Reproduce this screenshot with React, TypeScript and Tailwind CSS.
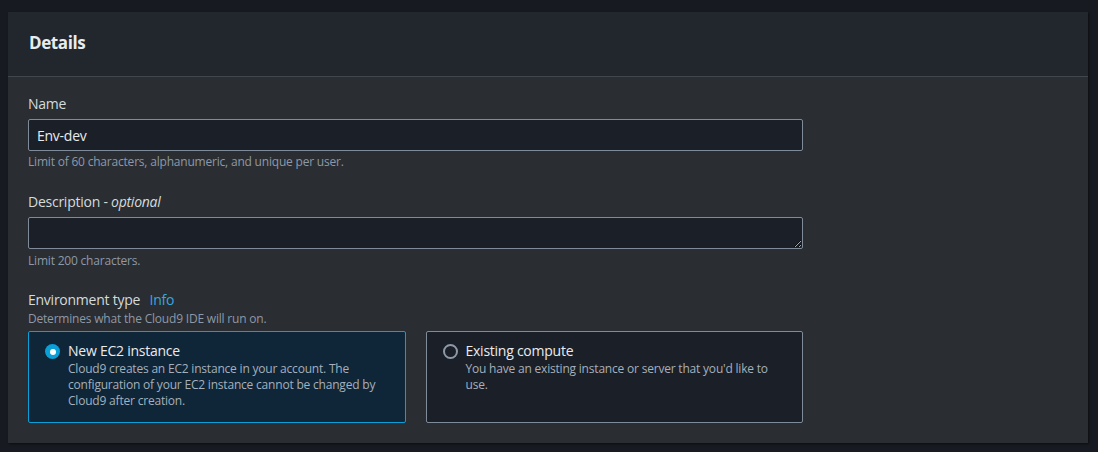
import React from "react";

export default function App() {
  const font = { fontFamily: '"Open Sans", "Noto Sans", Arial, sans-serif' };
  return (
    <div className="w-[1098px] h-[452px] bg-[#171a21] pt-[12px] px-[8px]" style={font}>
      <div className="w-[1080px] h-[431px] bg-[#2a2d32] shadow-[1px_1px_2px_rgba(0,0,0,0.5)] flex flex-col">
        <div className="h-[65px] bg-[#22262d] border-b border-[#414750] flex items-center px-[20px]">
          <h2 className="text-[17px] font-bold tracking-[-0.4px] text-[#e9ebed] leading-[22px] -mt-[3px] ml-[1px]">Details</h2>
        </div>
        <div className="px-[20px] pt-[16px] w-[815px]">
          <div className="text-[14px] leading-[22px] tracking-[-0.25px] text-[#d5dbdb]">Name</div>
          <div className="mt-[4px] h-[32px] border border-[#7f8b98] bg-[#1b1f27] rounded-[2px] flex items-center px-[8px] text-[14px] tracking-[-0.25px] text-[#e9ebed]">
            Env-dev
          </div>
          <div className="mt-[3px] text-[12px] leading-[16px] tracking-[-0.2px] text-[#8d99a8]">
            Limit of 60 characters, alphanumeric, and unique per user.
          </div>

          <div className="mt-[21px] text-[14px] leading-[22px] tracking-[-0.25px] text-[#d5dbdb]">
            Description - <i>optional</i>
          </div>
          <textarea
            className="mt-[4px] block w-full h-[32px] border border-[#7f8b98] bg-[#1b1f27] rounded-[2px] resize-y outline-none"
            defaultValue=""
          />
          <div className="mt-[4px] text-[12px] leading-[16px] tracking-[-0.2px] text-[#8d99a8]">Limit 200 characters.</div>

          <div className="mt-[20px] text-[14px] leading-[22px] tracking-[-0.25px] text-[#d5dbdb]">
            Environment type <span className="ml-[6px] text-[#35a8df]">Info</span>
          </div>
          <div className="text-[12px] leading-[16px] tracking-[-0.2px] text-[#8d99a8]">Determines what the Cloud9 IDE will run on.</div>

          <div className="mt-[4px] grid grid-cols-2 gap-[20px]">
            <div className="h-[92px] border border-[#0a9fd7] bg-[#0f2538] rounded-[2px] pl-[16px] pr-[16px] pt-[9px] flex gap-[8px]">
              <div className="mt-[3px] w-[15px] h-[15px] rounded-full bg-[#0a9fd7] flex items-center justify-center shrink-0">
                <div className="w-[6px] h-[6px] rounded-full bg-white" />
              </div>
              <div>
                <div className="text-[14px] leading-[20px] tracking-[-0.25px] text-[#e9ebed]">New EC2 instance</div>
                <div className="text-[12px] leading-[16px] tracking-[-0.2px] text-[#a6b0bb]">
                  Cloud9 creates an EC2 instance in your account. The configuration of your EC2 instance cannot be changed by Cloud9 after creation.
                </div>
              </div>
            </div>
            <div className="h-[92px] border border-[#7f8b98] bg-[#1b1f27] rounded-[2px] pl-[16px] pr-[16px] pt-[9px] flex gap-[8px]">
              <div className="mt-[3px] w-[15px] h-[15px] rounded-full border-2 border-[#8d99a8] shrink-0" />
              <div>
                <div className="text-[14px] leading-[20px] tracking-[-0.25px] text-[#e9ebed]">Existing compute</div>
                <div className="text-[12px] leading-[16px] tracking-[-0.2px] text-[#a6b0bb]">
                  You have an existing instance or server that you'd like to use.
                </div>
              </div>
            </div>
          </div>
        </div>
      </div>
    </div>
  );
}
